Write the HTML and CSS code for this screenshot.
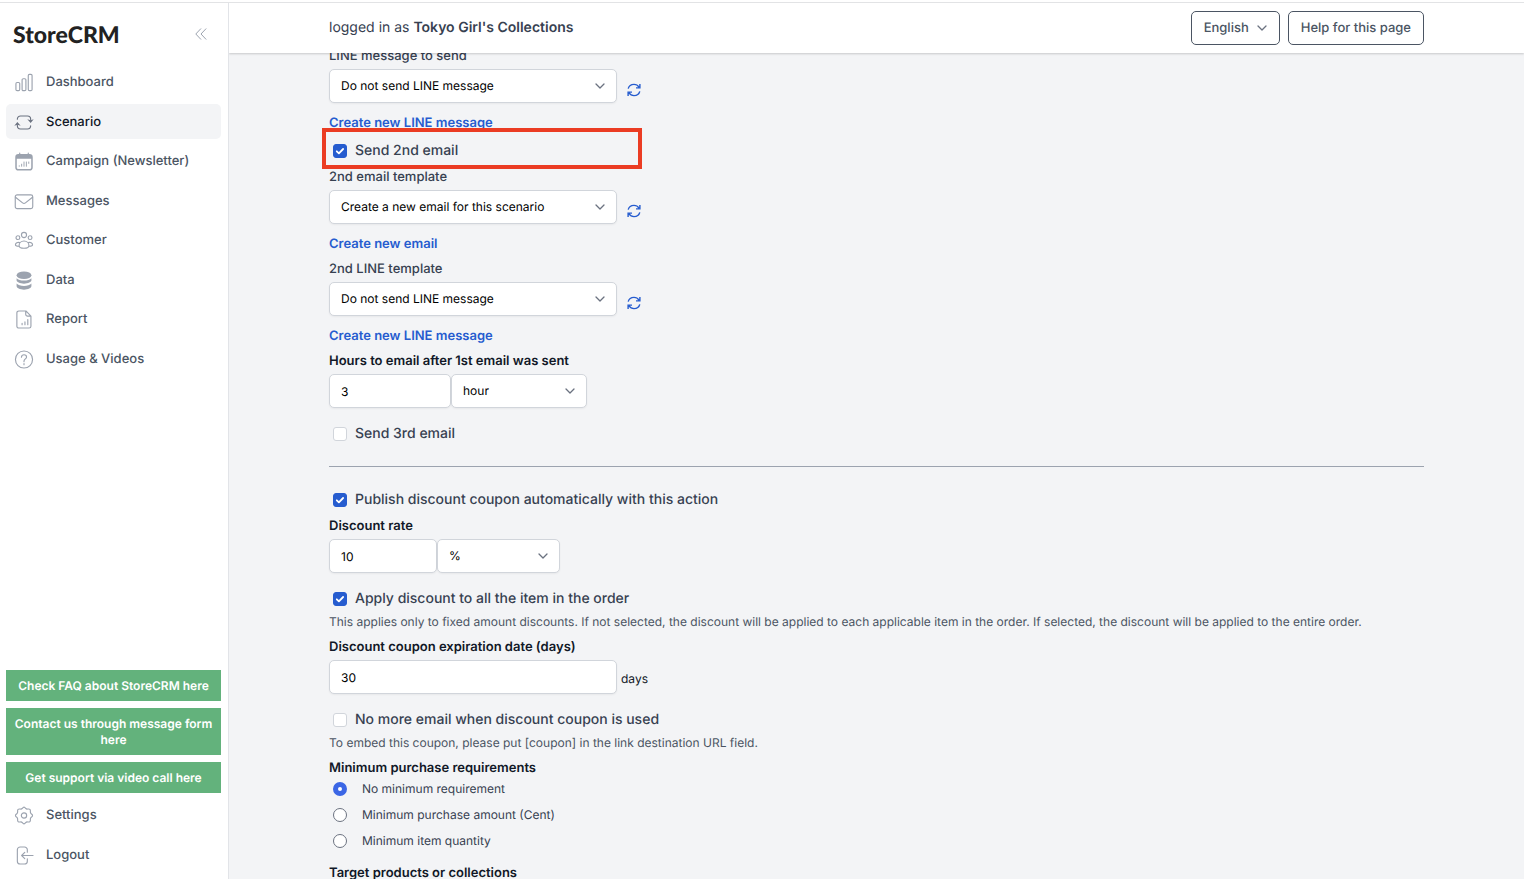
FILE: index.html
```
<!DOCTYPE html>
<html lang="en">
<head>
<meta charset="UTF-8">
<meta name="viewport" content="width=device-width, initial-scale=1.0">
<title>StoreCRM - Scenario</title>
<link rel="stylesheet" href="styles.css">
</head>
<body>
<svg class="sprite" aria-hidden="true">
    <symbol id="chevron" viewBox="0 0 10 10">
        <path d="M1 3l4 4 4-4" fill="none" stroke="currentColor" stroke-width="1.3" stroke-linecap="round" stroke-linejoin="round"/>
    </symbol>
    <symbol id="refresh" viewBox="0 0 14 14">
        <path d="M1.2 5.6C1.9 3 4.2 1.4 7 1.4c2.200 0 3.900 1 5 2.700M12.900 1v3.900H9M12.800 8.400C12.100 11 9.800 12.600 7 12.600c-2.200 0-3.900-1-5-2.700M1.100 13V9.100H5" fill="none" stroke="currentColor" stroke-width="1.4"/>
    </symbol>
</svg>
<div class="page">
    <aside class="sidebar">
        <div class="brand">
            <span class="logo">StoreCRM</span>
            <button type="button" class="collapse" aria-label="Collapse menu">
                <svg viewBox="0 0 12 12"><path d="M6 0.500L0.800 6 6 11.500M11.200 0.500L6 6l5.200 5.500"/></svg>
            </button>
        </div>
        <nav class="menu">
            <a href="#">
                <svg viewBox="0 0 20 20"><rect x="1.500" y="10" width="4" height="8.500" rx="1.200"/><rect x="8" y="6" width="4" height="12.500" rx="1.200"/><rect x="14.500" y="1.500" width="4" height="17" rx="1.200"/></svg>
                Dashboard
            </a>
            <a href="#" class="active">
                <svg viewBox="0 0 20 20"><path d="M3 6.500A3.300 3.300 0 0 1 6.300 3.200h7.400A3.300 3.300 0 0 1 17 6.500v1M17 13.500a3.300 3.300 0 0 1-3.300 3.300H6.300A3.300 3.300 0 0 1 3 13.500v-1"/><path class="solid" d="M13.500 6.500L17 7.600l3.200-1.100L17 10.600zM-.2 13.500L3 9.400l3.500 4.100L3 12.400z"/></svg>
                Scenario
            </a>
            <a href="#">
                <svg viewBox="0 0 20 20"><rect x="1.600" y="3" width="16.800" height="15.800" rx="2.500" stroke-width="1.600"/><path class="solid" d="M1.600 7V5a2 2 0 0 1 2-2h12.800a2 2 0 0 1 2 2v2z"/><path d="M5.500 1v3M14.500 1v3"/><path d="M5 14.500v.5M7.500 12.800V15M10 10.500V15M12.500 10.500V15M15 10.500v1.500" stroke-width="1"/></svg>
                Campaign (Newsletter)
            </a>
            <a href="#">
                <svg viewBox="0 0 20 20"><rect x="0.800" y="3" width="18.400" height="14.500" rx="2"/><path d="M1 5.500l7.500 6c1 .8 2 .8 3 0l7.500-6"/></svg>
                Messages
            </a>
            <a href="#">
                <svg viewBox="0 0 20 20"><circle cx="10" cy="4.200" r="2.700"/><circle cx="3.600" cy="7" r="2"/><circle cx="16.400" cy="7" r="2"/><path d="M4.800 15.500c0-2.800 2.200-5 5.200-5s5.200 2.200 5.200 5c0 1.600-2.400 2.700-5.200 2.700s-5.200-1.100-5.200-2.700z"/><path d="M5.300 12.200c-2-.7-4.300.4-4.300 2.300 0 .9 1.500 1.600 3.500 1.600M14.700 12.200c2-.7 4.300.4 4.300 2.300 0 .9-1.500 1.600-3.500 1.600"/></svg>
                Customer
            </a>
            <a href="#">
                <svg viewBox="0 0 20 20" class="filled"><ellipse cx="10" cy="4.500" rx="7.800" ry="4"/><path d="M2.200 7.600c1.400 1.500 4.400 2.500 7.800 2.500s6.400-1 7.800-2.500v2.200c0 1.900-3.500 3.500-7.800 3.500s-7.800-1.600-7.800-3.500zM2.200 13.200c1.400 1.500 4.400 2.500 7.800 2.500s6.400-1 7.800-2.500v2.700c0 2.100-3.500 3.800-7.800 3.800s-7.800-1.700-7.800-3.800z"/></svg>
                Data
            </a>
            <a href="#">
                <svg viewBox="0 0 20 20"><path d="M4.500 1H12l5.300 5.500v10.500a2 2 0 0 1-2 2H4.500a2 2 0 0 1-2-2V3a2 2 0 0 1 2-2zM11.800 1v3.500a2 2 0 0 0 2 2h3.400"/><path d="M8 14v1.500M11 12.500v3M14 10v5.500"/></svg>
                Report
            </a>
            <a href="#">
                <svg viewBox="0 0 20 20"><circle cx="10" cy="10" r="9"/><path d="M7.300 7.500C7.300 6 8.500 5 10 5s2.700 1 2.700 2.400c0 2-2.700 2-2.700 4.300v.6M10 14.200v1.200"/></svg>
                Usage &amp; Videos
            </a>
        </nav>
        <div class="support">
            <a href="#">Check FAQ about StoreCRM here</a>
            <a href="#">Contact us through message form here</a>
            <a href="#">Get support via video call here</a>
        </div>
        <nav class="menu">
            <a href="#">
                <svg viewBox="0 0 20 20"><circle cx="10" cy="10" r="2.800"/><path d="M8.200 2.600Q10-.3 11.800 2.600q.8.900 2.100.6 3.200-.6 2.800 2.600-.2 1.400.9 2.300 2.800 1.900 0 3.800-1.100.9-.9 2.300.4 3.200-2.800 2.600-1.300-.3-2.100.6-1.800 2.900-3.600 0-.8-.9-2.100-.6-3.200.6-2.800-2.600.2-1.400-.9-2.300-2.800-1.900 0-3.800 1.100-.9.900-2.300-.4-3.200 2.800-2.600 1.300.3 2.100-.6z"/></svg>
                Settings
            </a>
            <a href="#">
                <svg viewBox="0 0 20 20"><path d="M13.500 6.500V4a3 3 0 0 0-3-3H6a3 3 0 0 0-3 3v12a3 3 0 0 0 3 3h4.500a3 3 0 0 0 3-3v-2.500M19.500 10H7.500M10.800 6.800L7.500 10l3.300 3.200"/></svg>
                Logout
            </a>
        </nav>
    </aside>
    <main class="main">
        <header class="topbar">
            <p class="account">logged in as <strong>Tokyo Girl's Collections</strong></p>
            <button type="button" class="outline">English <svg class="chevron"><use href="#chevron"/></svg></button>
            <button type="button" class="outline">Help for this page</button>
        </header>
        <form class="form">
            <div class="field">
                <label for="line1">LINE message to send</label>
                <div class="controls">
                    <div class="select wide">
                        <select id="line1"><option>Do not send LINE message</option></select>
                        <svg class="chevron"><use href="#chevron"/></svg>
                    </div>
                    <button type="button" class="reload" aria-label="Reload"><svg><use href="#refresh"/></svg></button>
                </div>
                <a href="#" class="create">Create new LINE message</a>
            </div>
            <div class="check highlighted">
                <input type="checkbox" id="send2" checked>
                <label for="send2">Send 2nd email</label>
                <span class="highlight"></span>
            </div>
            <div class="field">
                <label for="email2">2nd email template</label>
                <div class="controls">
                    <div class="select wide">
                        <select id="email2"><option>Create a new email for this scenario</option></select>
                        <svg class="chevron"><use href="#chevron"/></svg>
                    </div>
                    <button type="button" class="reload" aria-label="Reload"><svg><use href="#refresh"/></svg></button>
                </div>
                <a href="#" class="create">Create new email</a>
            </div>
            <div class="field">
                <label for="line2">2nd LINE template</label>
                <div class="controls">
                    <div class="select wide">
                        <select id="line2"><option>Do not send LINE message</option></select>
                        <svg class="chevron"><use href="#chevron"/></svg>
                    </div>
                    <button type="button" class="reload" aria-label="Reload"><svg><use href="#refresh"/></svg></button>
                </div>
                <a href="#" class="create">Create new LINE message</a>
            </div>
            <div class="field">
                <label for="hours" class="strong">Hours to email after 1st email was sent</label>
                <div class="controls">
                    <input type="text" id="hours" class="hours" value="3">
                    <div class="select unit">
                        <select aria-label="Time unit"><option>hour</option></select>
                        <svg class="chevron"><use href="#chevron"/></svg>
                    </div>
                </div>
            </div>
            <div class="check">
                <input type="checkbox" id="send3">
                <label for="send3">Send 3rd email</label>
            </div>
            <hr>
            <div class="check">
                <input type="checkbox" id="publish" checked>
                <label for="publish">Publish discount coupon automatically with this action</label>
            </div>
            <div class="field">
                <label for="rate" class="strong">Discount rate</label>
                <div class="controls">
                    <input type="text" id="rate" class="rate" value="10">
                    <div class="select rate-unit">
                        <select aria-label="Discount unit"><option>%</option></select>
                        <svg class="chevron"><use href="#chevron"/></svg>
                    </div>
                </div>
            </div>
            <div class="check">
                <input type="checkbox" id="applyAll" checked>
                <label for="applyAll">Apply discount to all the item in the order</label>
            </div>
            <p class="help">This applies only to fixed amount discounts. If not selected, the discount will be applied to each applicable item in the order. If selected, the discount will be applied to the entire order.</p>
            <div class="field">
                <label for="expire" class="strong">Discount coupon expiration date (days)</label>
                <div class="controls">
                    <input type="text" id="expire" class="wide" value="30">
                    <span class="suffix">days</span>
                </div>
            </div>
            <div class="check">
                <input type="checkbox" id="noMore">
                <label for="noMore">No more email when discount coupon is used</label>
            </div>
            <p class="help">To embed this coupon, please put [coupon] in the link destination URL field.</p>
            <fieldset>
                <legend class="strong">Minimum purchase requirements</legend>
                <div class="radio">
                    <input type="radio" name="minimum" id="minNone" checked>
                    <label for="minNone">No minimum requirement</label>
                </div>
                <div class="radio">
                    <input type="radio" name="minimum" id="minAmount">
                    <label for="minAmount">Minimum purchase amount (Cent)</label>
                </div>
                <div class="radio">
                    <input type="radio" name="minimum" id="minItems">
                    <label for="minItems">Minimum item quantity</label>
                </div>
            </fieldset>
            <p class="section strong">Target products or collections</p>
        </form>
    </main>
</div>
</body>
</html>
```
FILE: styles.css
```
* {
    box-sizing: border-box;
}
body {
    margin: 0;
    font-family: Inter, "Liberation Sans", sans-serif;
    font-size: 13px;
    line-height: 18px;
    text-rendering: geometricPrecision;
    color: #374151;
    background-color: #fff;
}
button, input, select {
    font: inherit;
    text-rendering: inherit;
}
a {
    text-decoration: none;
}
p {
    margin: 0;
}
.sprite {
    display: none;
}
.page {
    display: flex;
    height: 100vh;
    padding-top: 3px;
    overflow: hidden;
    background: linear-gradient(#fff 2px, #e2e3e5 2px, #e2e3e5 3px, #fff 3px);
}

/* sidebar */
.sidebar {
    display: flex;
    flex-direction: column;
    flex: none;
    width: 229px;
    padding: 0 7px 7px 6px;
    border-right: 1px solid #e2e4e8;
}
.brand {
    display: flex;
    align-items: center;
    justify-content: space-between;
    height: 61px;
    padding: 0 14px 0 7px;
}
.logo {
    font-family: Lato, sans-serif;
    font-size: 23px;
    font-weight: 900;
    color: #222;
}
.collapse {
    display: flex;
    padding: 0;
    border: none;
    background: none;
    color: #9ca3af;
    cursor: pointer;
}
.collapse svg {
    width: 12px;
    height: 12px;
    fill: none;
    stroke: currentColor;
}
.menu {
    display: flex;
    flex-direction: column;
    gap: 4px;
}
.menu a {
    display: flex;
    align-items: center;
    gap: 12px;
    padding: 9px 8px 7px;
    border-radius: 5px;
    font-weight: 500;
    line-height: 1.5;
    color: #4b5563;
}
.menu svg {
    width: 20px;
    height: 19px;
    fill: none;
    stroke: #9ca3af;
    stroke-width: 1.2;
    stroke-linecap: round;
    stroke-linejoin: round;
}
.menu .solid, .menu .filled {
    fill: #9ca3af;
    stroke: none;
}
.menu .active {
    color: #111827;
    background-color: #f3f4f6;
}
.menu .active svg {
    stroke: #6b7280;
    overflow: visible;
}
.menu .active .solid {
    fill: #6b7280;
}
.support {
    display: flex;
    flex-direction: column;
    gap: 7px;
    margin-top: auto;
    margin-bottom: 4px;
}
.support a {
    padding: 8px 4px 7px;
    font-size: 12px;
    font-weight: 600;
    line-height: 16px;
    text-align: center;
    color: #fff;
    background-color: #63b27c;
}

/* top bar */
.main {
    flex: 1;
    min-width: 0;
    overflow: hidden;
    background-color: #f3f4f6;
}
.topbar {
    position: relative;
    z-index: 1;
    display: flex;
    align-items: center;
    gap: 8px;
    height: 50px;
    padding: 0 100px;
    background-color: #fff;
    box-shadow: 0 1px 2px rgba(0, 0, 0, 0.18);
}
.account {
    flex: 1;
    font-size: 14px;
}
.account strong {
    font-weight: 600;
}
.outline {
    display: flex;
    align-items: center;
    gap: 8px;
    height: 34px;
    padding: 0 12px;
    border: 1px solid #4b5563;
    border-radius: 5px;
    font-weight: 500;
    color: #4b5563;
    background-color: #fff;
    cursor: pointer;
}
.chevron {
    width: 10px;
    height: 10px;
    color: #6b7280;
}

/* form, scrolled slightly under the top bar */
.form {
    margin-top: -13px;
    padding: 0 100px;
}
.field {
    padding-top: 7px;
}
.field label {
    display: block;
    margin-bottom: 4px;
    font-weight: 500;
}
.field .strong, .strong {
    font-weight: 600;
    color: #111827;
}
.controls {
    display: flex;
    align-items: flex-end;
}
input[type="text"], select {
    height: 34px;
    padding: 0 11px;
    border: 1px solid #d1d5db;
    border-radius: 5px;
    font-size: 12px;
    color: #000;
    background-color: #fff;
    box-shadow: 0 1px 2px rgba(0, 0, 0, 0.05);
}
.select {
    display: grid;
    align-items: center;
}
.select select {
    grid-area: 1 / 1;
    width: 100%;
    appearance: none;
}
.select .chevron {
    grid-area: 1 / 1;
    justify-self: end;
    margin-right: 12px;
    pointer-events: none;
}
.wide {
    width: 288px;
}
.hours {
    width: 122px;
}
.unit {
    width: 136px;
}
.rate {
    width: 108px;
}
.rate-unit {
    width: 123px;
}
.reload {
    display: flex;
    margin: 0 0 6px 10px;
    padding: 0;
    border: none;
    background: none;
    color: #265ccf;
    cursor: pointer;
}
.reload svg {
    width: 14px;
    height: 14px;
}
.suffix {
    margin: 0 0 6px 4px;
    font-size: 12px;
    color: #111827;
}
.create {
    display: block;
    width: fit-content;
    margin-top: 11px;
    font-weight: 600;
    color: #265ccf;
}
.check {
    display: flex;
    align-items: center;
    gap: 8px;
    margin-top: 16px;
    padding-left: 4px;
    font-size: 14px;
    font-weight: 500;
    line-height: 20px;
}
.check input, .radio input {
    appearance: none;
    flex: none;
    width: 14px;
    height: 14px;
    margin: 0;
    border: 1px solid #d1d5db;
    border-radius: 3px;
    background-color: #fff;
}
.check input:checked {
    border-color: #265ccf;
    background: #265ccf url("data:image/svg+xml,%3Csvg xmlns='http://www.w3.org/2000/svg' viewBox='0 0 12 12'%3E%3Cpath d='M2.800 6.300l2.100 2 4.200-4.300' fill='none' stroke='white' stroke-width='1.800' stroke-linecap='round' stroke-linejoin='round'/%3E%3C/svg%3E") center / 12px no-repeat;
}
.highlighted {
    position: relative;
    margin-top: 9px;
}
.highlight {
    position: absolute;
    top: -13px;
    left: -7px;
    width: 320px;
    height: 41px;
    border: 4px solid #eb3c23;
    pointer-events: none;
}
hr {
    margin: 22px 0 23px;
    border: none;
    border-top: 1px solid #9ca3af;
}
.help {
    margin-top: 4px;
    font-size: 12px;
    color: #4b5563;
}
fieldset {
    display: flex;
    flex-direction: column;
    gap: 8px;
    margin: 7px 0 0;
    padding: 0;
    border: none;
}
legend {
    margin-bottom: 3px;
    padding: 0;
}
.radio {
    display: flex;
    align-items: center;
    gap: 15px;
    padding-left: 4px;
    font-size: 12px;
}
.radio input {
    border-color: #6b7280;
    border-radius: 50%;
}
.radio input:checked {
    border: 5px solid #3b66e5;
}
.section {
    margin-top: 14px;
}
```
